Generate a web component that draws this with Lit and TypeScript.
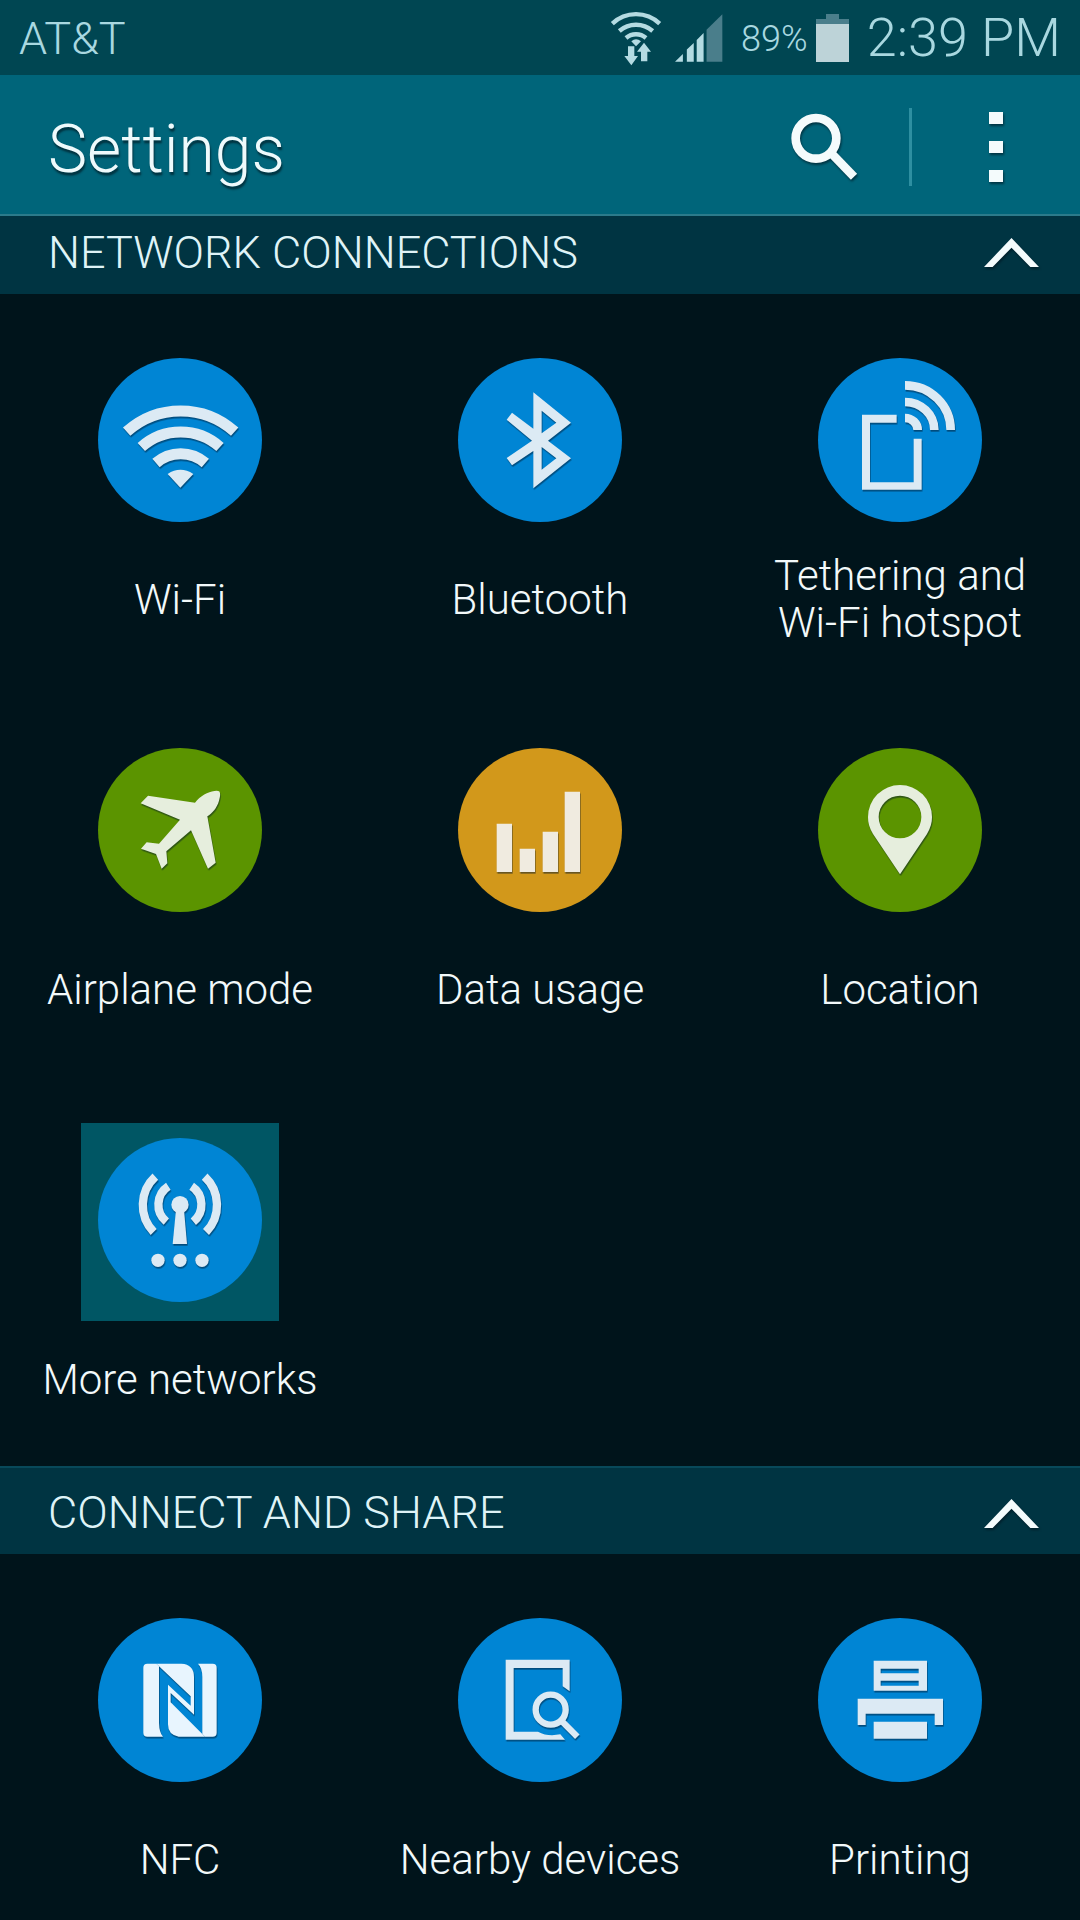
import { LitElement, html, svg, css } from "lit";
import type { SVGTemplateResult } from "lit";
import { customElement, property, state } from "lit/decorators.js";
import { classMap } from "lit/directives/class-map.js";

const glyphs: Record<string, SVGTemplateResult> = {
  wifi: svg`
    <g class="stroke" stroke-width="33">
      <path d="M141 276A242 242 0 0 1 465 276" />
      <path d="M185 322A177 177 0 0 1 421 322" />
      <path d="M229 370A112 112 0 0 1 377 370" />
    </g>
    <path d="M264 403Q302 378 341 403L302 444Z" />`,
  bluetooth: svg`
    <path fill-rule="evenodd" d="M281 158L394 249L325 303L394 356L281 446V334L217 377L201 355L277 303L201 240L217 219L281 267Z
      M306 213V281L350 249Z M306 322V390L350 356Z" />`,
  tethering: svg`
    <path d="M291 225H187V450H366V297H342V428H211V249H291Z" />
    <g class="stroke" stroke-width="26">
      <path d="M316 137A137 134 0 0 1 453 271" />
      <path d="M316 187A88 84 0 0 1 404 271" />
      <path d="M316 235A38 36 0 0 1 354 271" />
    </g>`,
  airplane: svg`
    <path d="M418 185C423 189 422 201 418 213C412 235 397 251 383 260L408 399L385 417L334 302L260 365L263 401L246 417L229 373L184 357L201 338L238 342L301 270L183 221L205 198L346 219C362 199 385 186 404 184Q414 182 418 185Z" />`,
  data: svg`<path d="M171 282H217V427H171Z M240 357H286V427H240Z M309 306H355V427H309Z M375 186H421V427H375Z" />`,
  location: svg`
    <path fill-rule="evenodd" d="M301 434L220 313C209 294 205 279 205 262A96 96 0 0 1 397 262C397 279 393 294 382 313Z
      M237 262A64 64 0 1 0 365 262A64 64 0 1 0 237 262Z" />`,
  networks: svg`
    <g transform="translate(-30 -30)">
      <g class="stroke" stroke-width="25">
        <path d="M296 230A66 66 0 0 0 290 336" />
        <path d="M257 201A116 116 0 0 0 252 367" />
        <path d="M366 230A66 66 0 0 1 371 336" />
        <path d="M405 201A116 116 0 0 1 409 367" />
      </g>
      <circle cx="331" cy="285" r="26" />
      <path d="M319 300H343L352 403H309Z" />
      <circle cx="265" cy="452" r="20" />
      <circle cx="331" cy="452" r="20" />
      <circle cx="397" cy="452" r="20" />
    </g>`,
  nfc: svg`
    <g class="bright">
      <path d="M203 192H230L238 200V370Q239 400 250 411H203Q191 411 191 399V204Q191 192 203 192Z" />
      <path d="M230 192H305Q343 194 343 232V345L273 280V308L368 403L376 411H297Q265 406 265 374V255L333 318V290L238 200Z" />
      <path d="M355 192H399Q411 192 411 204V399Q411 411 399 411H376L368 403V232Q368 205 355 192Z" />
    </g>`,
  nearby: svg`
    <path d="M198 180H390V275L369 260V205H222V396H295C315 408 340 408 362 404L376 420H198Z" />
    <g class="stroke" stroke-width="19">
      <circle cx="333" cy="330" r="45" />
      <path d="M366 364L413 411" />
    </g>`,
  printing: svg`
    <path fill-rule="evenodd" d="M222 183H382V273H222Z M243 207V221H357V207Z M243 243V258H357V243Z
      M174 297H430V376H405V342H198V376H174Z M222 366H382V417H222Z" />`,
};

interface Setting {
  label: string;
  icon: string;
  tone: "blue" | "green" | "amber";
  selected?: boolean;
}

interface Group {
  title: string;
  items: Setting[];
}

const groups: Group[] = [
  {
    title: "NETWORK CONNECTIONS",
    items: [
      { label: "Wi-Fi", icon: "wifi", tone: "blue" },
      { label: "Bluetooth", icon: "bluetooth", tone: "blue" },
      { label: "Tethering and Wi-Fi hotspot", icon: "tethering", tone: "blue" },
      { label: "Airplane mode", icon: "airplane", tone: "green" },
      { label: "Data usage", icon: "data", tone: "amber" },
      { label: "Location", icon: "location", tone: "green" },
      { label: "More networks", icon: "networks", tone: "blue", selected: true },
    ],
  },
  {
    title: "CONNECT AND SHARE",
    items: [
      { label: "NFC", icon: "nfc", tone: "blue" },
      { label: "Nearby devices", icon: "nearby", tone: "blue" },
      { label: "Printing", icon: "printing", tone: "blue" },
    ],
  },
];

@customElement("status-bar")
class StatusBar extends LitElement {
  static styles = css`
    :host {
      display: flex;
      align-items: center;
      height: 75px;
      padding: 0 19px;
      background: #004652;
      color: #a9d8e0;
      font-weight: 300;
    }
    svg {
      display: block;
      fill: #b4dbe2;
    }
    .carrier {
      padding-top: 3px;
      font-size: 45px;
      line-height: 52px;
      margin-right: auto;
    }
    .wifi {
      width: 52px;
      height: 58px;
      margin-right: 13px;
    }
    .arc {
      fill: none;
      stroke: #b4dbe2;
      stroke-width: 13;
    }
    .signal {
      width: 48px;
      height: 50px;
      margin-right: 18px;
    }
    .dim {
      fill: #4a7e8b;
    }
    .level {
      fill: #bdd3d8;
    }
    .percent {
      padding-top: 3px;
      font-size: 36px;
      line-height: 40px;
      margin-right: 8px;
    }
    .battery {
      width: 33px;
      height: 48px;
      margin-right: 18px;
    }
    .clock {
      font-size: 54px;
      line-height: 64px;
    }
  `;

  render() {
    return html`
      <span class="carrier">AT&amp;T</span>
      <svg class="wifi" viewBox="150 20 156 174" aria-hidden="true">
        <g class="arc">
          <path d="M157 64A103 103 0 0 1 299 64" />
          <path d="M178 86A76 76 0 0 1 278 86" />
          <path d="M198 107A46 46 0 0 1 258 107" />
        </g>
        <path d="M214 117Q228 105 243 117L228 132Z" />
        <path d="M204 132H223V161H234L214 189L193 161H204Z" />
        <path d="M243 177V148H231L252 121L273 148H262V177Z" />
      </svg>
      <svg class="signal" viewBox="345 36 146 150" aria-hidden="true">
        <path d="M345 183L369 160V183Z M381 183V146L402 126V183Z M411 183V117L432 96V183Z" />
        <path class="dim" d="M441 183V86L489 39V183Z" />
      </svg>
      <span class="percent">89%</span>
      <svg class="battery" viewBox="768 36 99 144" aria-hidden="true">
        <path class="dim" d="M798 36H837V51H867V66H768V51H798Z" />
        <path class="level" d="M768 66H867V180H768Z" />
      </svg>
      <span class="clock">2:39 PM</span>
    `;
  }
}

@customElement("setting-tile")
class SettingTile extends LitElement {
  @property({ attribute: false }) item!: Setting;

  static styles = css`
    :host {
      display: block;
    }
    .tile {
      display: flex;
      flex-direction: column;
      align-items: center;
      width: 100%;
      height: 390px;
      padding: 49px 0 0;
      border: 0;
      background: none;
      color: #f2f9fa;
      font: inherit;
      font-weight: 300;
    }
    .frame {
      box-sizing: border-box;
      width: 198px;
      height: 198px;
      padding: 15px 17px 19px;
    }
    .selected {
      background: #005664;
    }
    .icon {
      display: block;
      width: 164px;
      height: 164px;
    }
    .blue {
      fill: #0085d4;
    }
    .green {
      fill: #5b9400;
    }
    .amber {
      fill: #d2981b;
    }
    .glyph {
      fill: #dceaf4;
      stroke: none;
      filter: drop-shadow(2px 5px 2px rgba(0, 20, 40, 0.5));
    }
    .on-green {
      fill: #e6eedd;
    }
    .on-amber {
      fill: #f0ebe0;
    }
    .bright {
      fill: #e8f5fe;
    }
    .stroke {
      fill: none;
      stroke: #dceaf4;
    }
    .label {
      display: flex;
      align-items: center;
      height: 116px;
      max-width: 300px;
      font-size: 42px;
      line-height: 47px;
      text-align: center;
    }
  `;

  render() {
    const { label, icon, tone, selected } = this.item;
    return html`
      <button class="tile" type="button">
        <span class=${classMap({ frame: true, selected: !!selected })}>
          <svg class="icon" viewBox="55 55 492 492" aria-hidden="true">
            <circle class=${tone} cx="301" cy="301" r="246" />
            <g class="glyph on-${tone}">${glyphs[icon]}</g>
          </svg>
        </span>
        <span class="label">${label}</span>
      </button>
    `;
  }
}

@customElement("app-root")
class AppRoot extends LitElement {
  @state() private collapsed: Record<string, boolean> = {};

  static styles = css`
    :host {
      display: flex;
      flex-direction: column;
      height: 100vh;
      overflow: hidden;
      background: #00141b;
      color: #eefafc;
      font-family: Roboto, "Liberation Sans", sans-serif;
    }
    .app-bar {
      box-sizing: border-box;
      display: flex;
      align-items: center;
      height: 141px;
      flex: none;
      padding: 4px 0 0 48px;
      background: #00657a;
      border-bottom: 2px solid #2b7b8b;
    }
    status-bar {
      flex: none;
    }
    .title {
      margin: 0 auto 0 0;
      padding-top: 6px;
      font-size: 66px;
      line-height: 76px;
      font-weight: 300;
      text-shadow: 1px 3px 2px rgba(0, 30, 40, 0.7);
    }
    .action {
      box-sizing: border-box;
      display: flex;
      align-items: center;
      justify-content: center;
      width: 171px;
      height: 78px;
      padding: 0;
      border: 0;
      background: none;
    }
    .action + .action {
      border-left: 3px solid #2e8fa1;
    }
    .action svg,
    .chevron {
      display: block;
      fill: #f4fbfc;
      overflow: visible;
      filter: drop-shadow(1px 2px 1px rgba(0, 20, 30, 0.6));
    }
    .search {
      width: 70px;
      height: 72px;
    }
    .ring {
      fill: none;
      stroke: #f4fbfc;
      stroke-width: 26;
    }
    .more {
      width: 14px;
      height: 70px;
    }
    .list {
      flex: 1;
      min-height: 0;
      overflow-y: auto;
      scrollbar-width: none;
    }
    .heading {
      margin: 0;
      font-size: 45px;
      line-height: 52px;
      font-weight: 300;
    }
    .toggle {
      box-sizing: border-box;
      display: flex;
      align-items: center;
      justify-content: space-between;
      width: 100%;
      height: 88px;
      padding: 4px 41px 0 48px;
      border: 0;
      border-top: 2px solid #08495a;
      background: #003442;
      color: #dff3f7;
      font: inherit;
    }
    .group:first-child .toggle {
      height: 78px;
      padding: 0 41px 5px 48px;
      border-top: 0;
    }
    .chevron {
      width: 55px;
      height: 29px;
    }
    .closed {
      transform: rotate(180deg);
    }
    .grid {
      display: grid;
      grid-template-columns: repeat(3, 1fr);
      padding-bottom: 2px;
    }
  `;

  private toggle(title: string) {
    this.collapsed = { ...this.collapsed, [title]: !this.collapsed[title] };
  }

  private renderGroup(group: Group) {
    const closed = !!this.collapsed[group.title];
    return html`
      <section class="group">
        <h2 class="heading">
          <button class="toggle" type="button" aria-expanded=${closed ? "false" : "true"} @click=${() => this.toggle(group.title)}>
            <span>${group.title}</span>
            <svg class=${classMap({ chevron: true, closed })} viewBox="1271 711 166 87" aria-hidden="true">
              <path d="M1354 711L1437 798H1411L1354 740L1297 798H1271Z" />
            </svg>
          </button>
        </h2>
        ${closed
          ? null
          : html`<div class="grid">${group.items.map((item) => html`<setting-tile .item=${item}></setting-tile>`)}</div>`}
      </section>
    `;
  }

  render() {
    return html`
      <status-bar></status-bar>
      <header class="app-bar">
        <h1 class="title">Settings</h1>
        <button class="action" type="button" aria-label="Search">
          <svg class="search" viewBox="690 334 210 216" aria-hidden="true">
            <g class="ring">
              <circle cx="771" cy="416" r="61" />
              <path d="M814 458L885 531" />
            </g>
          </svg>
        </button>
        <button class="action" type="button" aria-label="More options">
          <svg class="more" viewBox="0 0 42 210" aria-hidden="true">
            <path d="M0 0H42V36H0Z M0 87H42V123H0Z M0 174H42V210H0Z" />
          </svg>
        </button>
      </header>
      <main class="list">${groups.map((group) => this.renderGroup(group))}</main>
    `;
  }
}
